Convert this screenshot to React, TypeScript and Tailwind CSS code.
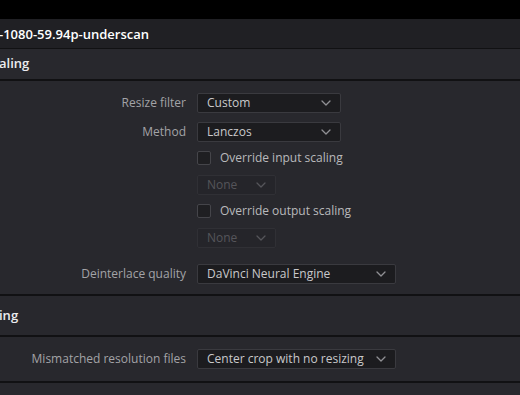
function Chevron({ color }: { color: string }) {
  return (
    <svg width="10" height="6" viewBox="0 0 10 6" className={color} fill="none">
      <path d="M1 1l4 4 4-4" stroke="currentColor" strokeWidth="1.3" strokeLinecap="round" strokeLinejoin="round" />
    </svg>
  );
}

function Select({ value, width, disabled }: { value: string; width: string; disabled?: boolean }) {
  return (
    <div
      className={`flex h-[20px] items-center justify-between rounded-[2px] border pl-[9px] pr-[9px] ${width} ${
        disabled ? "border-[#303035] bg-[#25252a] text-[#55555a]" : "border-[#3a3a3f] bg-[#1c1c1f] text-[#c9c9cb]"
      }`}
    >
      <span className="text-[12px] leading-none">{value}</span>
      <Chevron color={disabled ? "text-[#55555a]" : "text-[#909094]"} />
    </div>
  );
}

function Label({ children }: { children: string }) {
  return <div className="w-[186px] shrink-0 text-right text-[12px] text-[#a3a3a7]">{children}</div>;
}

function Checkbox({ label }: { label: string }) {
  return (
    <div className="flex h-[14px] items-center">
      <div className="h-[14px] w-[14px] rounded-[2px] border border-[#45454a] bg-[#1f1f22]" />
      <span className="ml-[9px] text-[12px] text-[#b9b9bc]">{label}</span>
    </div>
  );
}

export default function App() {
  return (
    <div
      className="h-[395px] w-[520px] overflow-hidden bg-[#28282d]"
      style={{ fontFamily: '"Open Sans", "Noto Sans", sans-serif' }}
    >
      <div className="h-[19px] bg-black" />
      <div className="flex h-[30px] items-center border-b border-[#111113] bg-[#202024] pt-[2px]">
        <span className="-ml-[1px] text-[13px] font-semibold text-white">-1080-59.94p-underscan</span>
      </div>
      <div className="flex h-[32px] items-center border-b-2 border-[#111113] bg-[#28282d]">
        <span className="-ml-[1px] text-[13px] font-semibold text-[#ececee]">aling</span>
      </div>

      <div className="flex flex-col border-b-2 border-[#111113] pb-[10px] pt-[12px]">
        <div className="flex items-center gap-[11px]">
          <Label>Resize filter</Label>
          <Select value="Custom" width="w-[144px]" />
        </div>
        <div className="mt-[9px] flex items-center gap-[11px]">
          <Label>Method</Label>
          <Select value="Lanczos" width="w-[144px]" />
        </div>
        <div className="mt-[9px] ml-[197px]">
          <Checkbox label="Override input scaling" />
        </div>
        <div className="mt-[10px] ml-[197px]">
          <Select value="None" width="w-[79px]" disabled />
        </div>
        <div className="mt-[9px] ml-[197px]">
          <Checkbox label="Override output scaling" />
        </div>
        <div className="mt-[10px] ml-[197px]">
          <Select value="None" width="w-[79px]" disabled />
        </div>
        <div className="mt-[16px] flex items-center gap-[11px]">
          <Label>Deinterlace quality</Label>
          <Select value="DaVinci Neural Engine" width="w-[199px]" />
        </div>
      </div>

      <div className="flex h-[41px] items-center border-b-2 border-[#111113]">
        <span className="-ml-[1px] text-[13px] font-semibold text-[#ececee]">ing</span>
      </div>

      <div className="flex items-center gap-[11px] border-b-2 border-[#111113] pb-[12px] pt-[12px]">
        <Label>Mismatched resolution files</Label>
        <Select value="Center crop with no resizing" width="w-[199px]" />
      </div>
    </div>
  );
}
